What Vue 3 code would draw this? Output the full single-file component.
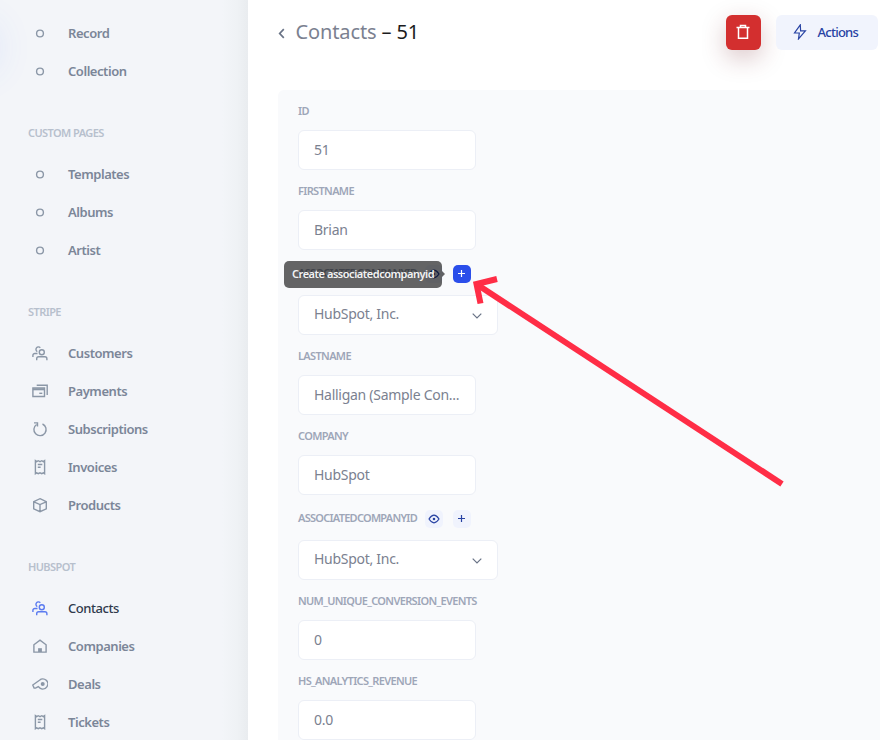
<script setup>
const groups = [
  { title: '', items: [
    { label: 'Record', icon: 'dot' }, { label: 'Collection', icon: 'dot' }] },
  { title: 'CUSTOM PAGES', items: [
    { label: 'Templates', icon: 'dot' }, { label: 'Albums', icon: 'dot' }, { label: 'Artist', icon: 'dot' }] },
  { title: 'STRIPE', items: [
    { label: 'Customers', icon: 'users' }, { label: 'Payments', icon: 'cards' },
    { label: 'Subscriptions', icon: 'cycle' }, { label: 'Invoices', icon: 'receipt' },
    { label: 'Products', icon: 'box' }] },
  { title: 'HUBSPOT', items: [
    { label: 'Contacts', icon: 'users', active: true }, { label: 'Companies', icon: 'home' },
    { label: 'Deals', icon: 'whistle' }, { label: 'Tickets', icon: 'receipt' }] },
]

const fields = [
  { label: 'ID', value: '51' },
  { label: 'FIRSTNAME', value: 'Brian' },
  { label: 'ASSOCIATEDCOMPANYID', value: 'HubSpot, Inc.', relation: true, hovered: true },
  { label: 'LASTNAME', value: 'Halligan (Sample Con...' },
  { label: 'COMPANY', value: 'HubSpot' },
  { label: 'ASSOCIATEDCOMPANYID', value: 'HubSpot, Inc.', relation: true },
  { label: 'NUM_UNIQUE_CONVERSION_EVENTS', value: '0' },
  { label: 'HS_ANALYTICS_REVENUE', value: '0.0' },
]
</script>

<template>
  <div class="app">
    <aside class="sidebar">
      <div class="glow"></div>
      <nav class="nav">
        <section v-for="(g, i) in groups" :key="i">
          <h3 v-if="g.title" class="group-title"><span>{{ g.title }}</span></h3>
          <a v-for="item in g.items" :key="item.label" class="item" :class="{ active: item.active }">
            <svg class="icon" viewBox="0 0 16 16" width="16" height="16">
              <circle v-if="item.icon === 'dot'" cx="8" cy="8.5" r="3.4" />
              <g v-else-if="item.icon === 'users'">
                <circle cx="9.8" cy="7.2" r="2.5" />
                <path d="M4.700 15.200v-1.400a2 2 0 0 1 2-2h6.200a2 2 0 0 1 2 2v1.400M.9 12v-1.500a2 2 0 0 1 2-2h2.600M5.300 6.600A2.500 2.500 0 1 1 8.300 2.700" />
              </g>
              <g v-else-if="item.icon === 'cards'">
                <path d="M.9 5h11.600v8.500H.9zM4.700 2.200h10.500V12" />
                <path d="M.9 6.300h11.600" class="thick" />
                <path d="M7.300 10.300h3" />
              </g>
              <g v-else-if="item.icon === 'cycle'">
                <path d="M4.600 3.500a6.100 6.100 0 1 0 5.900-.5" />
                <path d="M2 1.900h3.500v3.600" />
              </g>
              <g v-else-if="item.icon === 'receipt'">
                <path d="M3.400 1.700l1.300.9 1.500-.9 1.800.9 1.800-.9 1.500.9 1.300-.9v13l-1.300-.9-1.500.9-1.800-.9-1.800.9-1.500-.9-1.300.9z" />
                <path d="M5.800 5.500h4.500M5.800 8.300h2.800" />
              </g>
              <g v-else-if="item.icon === 'box'">
                <path d="M8 1.700l6.300 2.900v7.200L8 14.700l-6.300-2.900V4.600zM1.900 4.800L8 7.600l6.100-2.800M8 7.600v7" />
              </g>
              <g v-else-if="item.icon === 'home'">
                <path d="M1.900 6.800L8 2.200l6.100 4.600v7.300H1.900z" />
                <path d="M6.100 10.200h3.800v3.800H6.100z" class="solid" />
              </g>
              <g v-else-if="item.icon === 'whistle'">
                <path d="M.8 9L7.500 4.200A5 5 0 1 1 8 12.100L6.300 10.600 3.500 12.100H2.100z" />
                <circle cx="10.700" cy="7.900" r="2" class="solid" />
              </g>
            </svg>
            <span class="item-label">{{ item.label }}</span>
          </a>
        </section>
      </nav>
    </aside>

    <main class="main">
      <header class="header">
        <svg class="back" viewBox="0 0 7 11" width="7" height="11"><path d="M5.800 1.200L1.700 5.500l4.100 4.300" /></svg>
        <h1 class="title"><span class="crumb">Contacts</span> – 51</h1>
        <button class="delete" aria-label="Delete">
          <svg viewBox="0 0 14 16" width="14" height="16"><path d="M.5 3.500h13M4.500 3V1.500h5V3M2.500 3.500v10.700h9V3.500" /></svg>
        </button>
        <button class="actions">
          <svg viewBox="0 0 14 16" width="14" height="16"><path d="M7.300.8L1.500 9h4.800l-.8 5.900L12.400 6.800H7.600z" /></svg>
          <span>Actions</span>
        </button>
      </header>

      <div class="panel">
        <div v-for="(f, i) in fields" :key="i" class="field">
          <div class="label-row" :class="{ relation: f.relation }">
            <label class="label">{{ f.label }}</label>
            <template v-if="f.relation">
              <span class="mini eye">
                <svg viewBox="0 0 12 10" width="12" height="10"><path d="M1 5Q6-2.600 11 5 6 12.600 1 5z" /><circle cx="6" cy="5" r=".7" /></svg>
              </span>
              <span class="mini plus" :class="{ hovered: f.hovered }">
                <svg viewBox="0 0 10 10" width="10" height="10"><path d="M4.500 1v7M1 4.500h7" /></svg>
              </span>
              <div v-if="f.hovered" class="tooltip"><span>Create associatedcompanyid</span></div>
            </template>
          </div>
          <div class="input" :class="{ select: f.relation }">
            <span>{{ f.value }}</span>
            <svg v-if="f.relation" class="chevron" viewBox="0 0 10 6" width="10" height="6"><path d="M.7.700L5 5 9.300.700" /></svg>
          </div>
        </div>
      </div>
    </main>

    <svg class="pointer" viewBox="0 0 880 740" width="880" height="740">
      <path d="M782 484L477 284.500" />
      <path d="M497 279L476.500 284l4 19.500" />
    </svg>
  </div>
</template>

<style>
body { margin: 0; overflow: hidden; }
</style>

<style scoped>
.app { position: relative; display: flex; width: 880px; height: 740px; overflow: hidden; background: #fff; font-family: "Noto Sans", "Open Sans", sans-serif; }
.sidebar { position: relative; flex: none; width: 248px; height: 740px; overflow: hidden; background: linear-gradient(to right, #f3f5f9 0, #f3f5f9 222px, #eff2f5 237px, #e9ecef 248px); }
.glow { position: absolute; left: -70px; top: 25px; width: 66px; height: 45px; border-radius: 12px; box-shadow: 0 0 36px 2px rgba(60, 110, 255, .1); }
.nav { padding: 14px 0 0 28px; }
.group-title { box-sizing: border-box; height: 65px; margin: 0; padding-top: 35px; font-size: 11px; line-height: 16px; font-weight: 600; letter-spacing: -.58px; color: #b7c0cd; }
.item { display: flex; align-items: center; height: 38px; padding-left: 4px; gap: 20px; color: #7b8794; }
.item-label { font-size: 13px; line-height: 18px; font-weight: 600; letter-spacing: -.45px; color: #7b8698; }
.active .item-label { color: #2f3a4c; font-weight: 500; }
.icon { flex: none; fill: none; stroke: #8b97a7; stroke-width: 1.400; }
.active .icon { stroke: #5b7bf0; }
.thick { stroke-width: 2; }
.solid { fill: #8b97a7; stroke: none; }
.main { flex: 1; min-width: 0; }
.header { display: flex; align-items: center; box-sizing: border-box; height: 90px; padding: 15px 2px 40px 30px; }
.back { fill: none; stroke: #697386; stroke-width: 1.700; margin: 2px 10.500px 0 0; }
.title { flex: 1; margin: 0; padding-bottom: 2px; font-size: 20px; line-height: 30px; font-weight: 400; letter-spacing: -.12px; color: #1b1b20; }
.crumb { color: #7b8190; }
button { border: 0; padding: 0; font-family: inherit; }
.delete { display: flex; align-items: center; justify-content: center; width: 35px; height: 35px; margin-right: 15px; padding: 0 1px 1px 0; border-radius: 6px; background: #d32f2f; box-shadow: 0 8px 24px rgba(110, 30, 40, .25); }
.delete svg { fill: none; stroke: #fff; stroke-width: 1.500; }
.actions { display: flex; align-items: center; width: 102px; height: 35px; padding: 0 0 2px 17px; gap: 10.500px; border-radius: 6px; background: #f1f4fd; color: #2742a3; font-size: 13px; font-weight: 500; letter-spacing: -.75px; }
.actions svg { fill: none; stroke: #2742a3; stroke-width: 1.200; }
.panel { box-sizing: border-box; height: 650px; padding: 0 20px; margin-left: 30px; border-top-left-radius: 6px; background: #f9fafc; }
.label-row { position: relative; display: flex; align-items: center; box-sizing: border-box; height: 40px; padding-top: 2px; }
.label-row.relation { height: 45px; padding-top: 3px; }
.label { width: 119px; font-size: 11px; line-height: 16px; font-weight: 600; letter-spacing: -.66px; white-space: nowrap; color: #9ea6b8; }
.relation .label { padding-bottom: 2px; letter-spacing: -.74px; }
.mini { display: flex; align-items: center; justify-content: center; width: 18px; height: 18px; border-radius: 5px; background: #f0f3fd; }
.mini svg { fill: none; stroke: #2742a3; stroke-width: 1.200; }
.eye { margin: 0 10px 0 8px; }
.eye svg { margin: 0 1px 1px 0; }
.plus.hovered { background: #2b4eea; }
.plus.hovered svg { stroke: #fff; }
.tooltip { position: absolute; left: -14px; top: 10.500px; width: 158px; height: 27px; box-sizing: border-box; padding-left: 8px; border-radius: 5px; background: rgba(0, 0, 0, .6); color: #f3f3f3; font-size: 11px; line-height: 25px; font-weight: 600; letter-spacing: -.47px; white-space: nowrap; }
.tooltip::after { content: ""; position: absolute; left: 158px; top: 10px; border: 3.500px solid transparent; border-right: 0; border-left-color: rgba(0, 0, 0, .6); }
.input { display: flex; align-items: center; justify-content: space-between; box-sizing: border-box; width: 178px; height: 40px; padding: 0 15px 2px; border: 1px solid #eceff6; border-radius: 6px; background: #fff; color: #7b8190; font-size: 14px; letter-spacing: -.28px; white-space: nowrap; }
.input.select { width: 200px; padding-bottom: 4px; }
.chevron { margin: 6px 0 0; fill: none; stroke: #697386; stroke-width: 1.200; }
.pointer { position: absolute; left: 0; top: 0; fill: none; stroke: #ff2d46; stroke-width: 6; pointer-events: none; }
</style>
